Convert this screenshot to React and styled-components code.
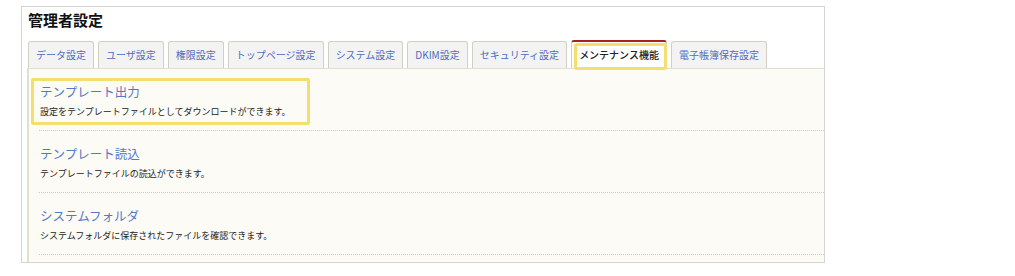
import styled, { createGlobalStyle } from "styled-components";

const GlobalStyle = createGlobalStyle`
  body {
    margin: 0;
    background: #fff;
    font-family: "Noto Sans CJK JP", "Noto Sans", sans-serif;
  }
`;

const Panel = styled.div`
  margin: 6px 0 0 21px;
  width: 797px;
  border: 1px solid #d4d4d4;
  padding-left: 5px;
  background: #fff;
`;

const Heading = styled.h1`
  margin: 0;
  padding: 3px 0 0 1px;
  font-size: 15px;
  line-height: 20px;
  font-weight: bold;
  color: #111;
`;

const TabRow = styled.ul`
  list-style: none;
  display: flex;
  align-items: flex-end;
  gap: 4px;
  height: 28px;
  margin: 10px 0 0;
  padding: 0 0 0 1px;
`;

const Tab = styled.li`
  position: relative;
  height: 26px;
  padding: 0 7px;
  border: 1px solid #d3cfc1;
  border-top: ${(p) => (p.$active ? "2px solid #a8221c" : "1px solid #d3cfc1")};
  border-bottom: none;
  border-radius: 3px 3px 0 0;
  background: ${(p) => (p.$active ? "#fff" : "#f3f3f3")};
  color: ${(p) => (p.$active ? "#222" : "#4d6cc0")};
  font-size: 10px;
  font-weight: ${(p) => (p.$active ? 500 : "normal")};
  line-height: 26px;
  white-space: nowrap;
  cursor: pointer;
  &::after {
    content: "";
    display: ${(p) => (p.$marked ? "block" : "none")};
    position: absolute;
    left: 2px;
    right: -1px;
    top: 1px;
    bottom: -2px;
    border: 3px solid #f2df70;
    border-radius: 3px;
    z-index: 2;
  }
`;

const Content = styled.div`
  border-top: 1px solid #e3dfcf;
  border-left: 2px solid #e3dfcf;
  background: #fcfbf6;
  padding-bottom: 7px;
`;

const Item = styled.div`
  margin-left: 10px;
  padding: 9px 0 5px;
  border-bottom: 1px dotted #c8c8c8;
`;

const ItemBody = styled.div`
  display: inline-block;
  margin-left: -8px;
  padding: 1px 16px 3px 6px;
  border: 3px solid ${(p) => (p.$marked ? "#f2df70" : "transparent")};
  border-radius: 2px;
`;

const ItemTitle = styled.a`
  display: block;
  font-size: 12.5px;
  line-height: 20px;
  color: #5577c6;
  text-decoration: none;
  cursor: pointer;
`;

const ItemDesc = styled.p`
  margin: 3px 0 0;
  font-size: 9px;
  line-height: 14px;
  color: #222;
`;

const tabs = [
  "データ設定",
  "ユーザ設定",
  "権限設定",
  "トップページ設定",
  "システム設定",
  "DKIM設定",
  "セキュリティ設定",
  "メンテナンス機能",
  "電子帳簿保存設定",
];

const items = [
  { title: "テンプレート出力", desc: "設定をテンプレートファイルとしてダウンロードができます。", marked: true },
  { title: "テンプレート読込", desc: "テンプレートファイルの読込ができます。" },
  { title: "システムフォルダ", desc: "システムフォルダに保存されたファイルを確認できます。" },
];

export default function App() {
  const active = "メンテナンス機能";
  return (
    <>
      <GlobalStyle />
      <Panel>
        <Heading>管理者設定</Heading>
        <TabRow>
          {tabs.map((t) => (
            <Tab key={t} $active={t === active} $marked={t === active}>
              {t}
            </Tab>
          ))}
        </TabRow>
        <Content>
          {items.map((item) => (
            <Item key={item.title}>
              <ItemBody $marked={item.marked}>
                <ItemTitle>{item.title}</ItemTitle>
                <ItemDesc>{item.desc}</ItemDesc>
              </ItemBody>
            </Item>
          ))}
        </Content>
      </Panel>
    </>
  );
}
